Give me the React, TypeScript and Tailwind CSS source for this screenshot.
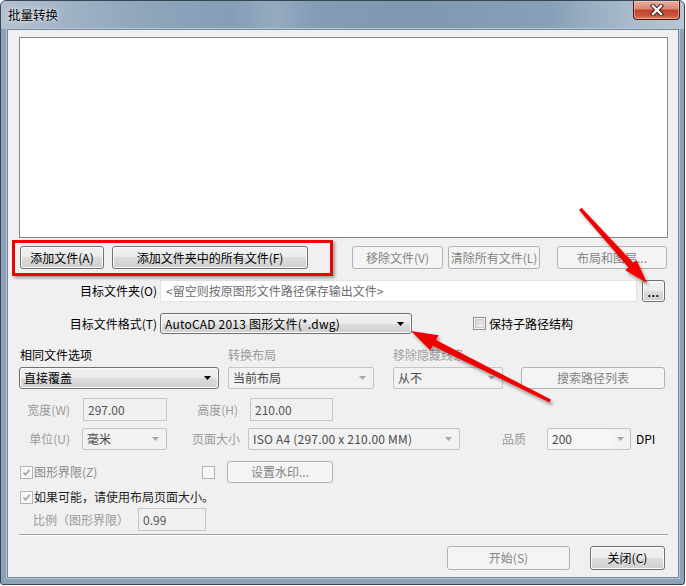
import React from "react";

const BTN_EN =
  "border-[#707070] bg-[linear-gradient(#f2f2f2,#ebebeb_50%,#dddddd_50%,#cfcfcf)] text-black shadow-[inset_0_0_0_1px_#fbfbfb]";
const BTN_DIS = "border-[#adb2b5] bg-[#f4f4f4] text-[#838383]";

function Btn({ cls, disabled, children }: { cls: string; disabled?: boolean; children: React.ReactNode }) {
  return (
    <div
      className={`flex shrink-0 items-center justify-center rounded-[3px] border text-[12px] leading-none ${
        disabled ? BTN_DIS : BTN_EN
      } ${cls}`}
    >
      {children}
    </div>
  );
}

function Tri({ color, cls = "" }: { color: string; cls?: string }) {
  return (
    <svg width="7" height="4" viewBox="0 0 7 4" className={`shrink-0 ${cls}`}>
      <polygon points="0,0 7,0 3.5,4" fill={color} />
    </svg>
  );
}

function Combo({ cls, text }: { cls: string; text: string }) {
  return (
    <div className={`flex shrink-0 items-center rounded-[3px] border ${BTN_EN} ${cls}`}>
      <span className="flex-1 whitespace-nowrap pl-[4px] text-[12px] leading-none text-black">{text}</span>
      <Tri color="#000" cls="mr-[7px]" />
    </div>
  );
}

function DCombo({ cls, text, editable }: { cls: string; text: string; editable?: boolean }) {
  return (
    <div className={`flex shrink-0 items-center rounded-[2px] border border-[#c4c4c4] bg-[#f2f2f2] ${cls}`}>
      <span
        className={`flex h-full flex-1 items-center whitespace-nowrap pl-[4px] text-[12px] leading-none text-[#4a4a4a] ${
          editable ? "mr-[17px] bg-[#f6f6f6]" : ""
        }`}
      >
        {text}
      </span>
      <Tri color="#a9a9a9" cls={editable ? "mr-[6px] -ml-[12px]" : "mr-[7px]"} />
    </div>
  );
}

function DInput({ cls, text }: { cls: string; text: string }) {
  return (
    <div className={`flex shrink-0 items-center border border-[#c6c6c6] bg-[#f0f0f0] pl-[4px] text-[12px] leading-none text-[#555] ${cls}`}>
      {text}
    </div>
  );
}

function Check({ checked, disabled }: { checked?: boolean; disabled?: boolean }) {
  return (
    <div
      className={`flex h-[13px] w-[13px] shrink-0 items-center justify-center border ${
        disabled ? "border-[#b4b4b4] bg-[#f7f7f7]" : "border-[#8e8f8f] bg-[#f4f4f4]"
      }`}
    >
      {checked ? (
        <svg width="9" height="9" viewBox="0 0 9 9">
          <path d="M1.5 4.6 L3.6 6.8 L7.6 1.8" stroke="#a3a3a3" strokeWidth="1.6" fill="none" />
        </svg>
      ) : disabled ? null : (
        <div className="h-[9px] w-[9px] border border-[#c9c9c9] bg-[linear-gradient(135deg,#d0d0d0,#f4f4f4)]" />
      )}
    </div>
  );
}

export default function App() {
  return (
    <div className="relative h-[586px] w-[686px] overflow-hidden bg-white font-['Noto_Sans_CJK_SC',sans-serif]">
      {/* Window */}
      <div className="flex h-[585px] w-[685px] flex-col rounded-t-[6px] rounded-b-[3px] border border-[#3a4552] bg-[#8ca2b8]">
        {/* Title bar */}
        <div className="flex h-[28px] shrink-0 items-center rounded-t-[5px] bg-[linear-gradient(to_right,#b3c2d1_0%,#a2b5c8_8%,#8fa6bc_20%,#859eb6_34%,#95abc0_40%,#849db5_46%,#7f98b0_60%,#86a0b7_80%,#a8bacc_92%,#b7c6d5_100%)] pl-[7px]">
          <span className="text-[12.5px] leading-none text-black [text-shadow:0_0_6px_rgba(255,255,255,0.9),0_0_2px_rgba(255,255,255,0.8)]">
            批量转换
          </span>
          <div className="mr-[4px] ml-auto flex h-[19px] w-[47px] -mt-[9px] self-center items-center justify-center rounded-b-[4px] border border-t-0 border-[#4a1b13] bg-[linear-gradient(#eab0a3,#d98471_45%,#c0402a_50%,#c9553b_80%,#de8468)] shadow-[inset_0_0_0_1px_rgba(255,220,210,0.45)]">
            <svg width="14" height="12" viewBox="0 0 14 12">
              <path d="M3 2 L11 10 M11 2 L3 10" stroke="#3b1d18" strokeWidth="4.4" strokeLinecap="square" />
              <path d="M3 2 L11 10 M11 2 L3 10" stroke="#ffffff" strokeWidth="2.4" strokeLinecap="square" />
            </svg>
          </div>
        </div>

        {/* Client area */}
        <div className="ml-[6px] flex h-[549px] w-[672px] flex-col border border-[#76879a] bg-[#f0f0f0] shadow-[0_0_0_1px_#b9c7d4]">
          {/* List box */}
          <div className="mt-[7px] ml-[11px] h-[201px] w-[649px] shrink-0 border border-[#828790] bg-white" />

          {/* Buttons row */}
          <div className="mt-[8px] ml-[12px] flex h-[23px] shrink-0">
            <Btn cls="w-[84px] h-[23px]">添加文件(A)</Btn>
            <Btn cls="ml-[8px] w-[196px] h-[23px]">添加文件夹中的所有文件(F)</Btn>
            <Btn cls="ml-[44px] w-[91px] h-[23px]" disabled>
              移除文件(V)
            </Btn>
            <Btn cls="ml-[5px] w-[92px] h-[23px]" disabled>
              清除所有文件(L)
            </Btn>
            <Btn cls="ml-[17px] w-[110px] h-[23px]" disabled>
              布局和图层...
            </Btn>
          </div>

          {/* Target folder */}
          <div className="mt-[11px] flex h-[22px] shrink-0 items-center">
            <div className="w-[149px] text-right text-[12px] leading-none text-black">目标文件夹(O)</div>
            <div className="ml-[3px] flex h-[22px] w-[477px] items-center border border-[#e2e3e4] bg-white pl-[5px] text-[12px] leading-none text-[#6d6d6d]">
              &lt;留空则按原图形文件路径保存输出文件&gt;
            </div>
            <Btn cls="ml-[5px] w-[23px] h-[22px]">
              <span className="mt-[2px] text-[11px] font-bold tracking-[0.5px]">...</span>
            </Btn>
          </div>

          {/* Target format */}
          <div className="mt-[11px] flex h-[21px] shrink-0 items-center">
            <div className="w-[149px] text-right text-[12px] leading-none text-black">目标文件格式(T)</div>
            <Combo cls="ml-[3px] w-[252px] h-[21px] tracking-[0.2px]" text="AutoCAD 2013 图形文件(*.dwg)" />
            <div className="ml-[61px] flex items-center">
              <Check />
              <span className="ml-[3px] text-[12px] leading-none text-black">保持子路径结构</span>
            </div>
          </div>

          {/* Section labels */}
          <div className="mt-[13px] flex h-[16px] shrink-0 items-center text-[12px] leading-none">
            <div className="ml-[12px] w-[208px] text-black">相同文件选项</div>
            <div className="w-[165px] text-[#9a9a9a]">转换布局</div>
            <div className="text-[#a0a0a0]">移除隐藏线条</div>
          </div>

          {/* Combos row */}
          <div className="mt-[4px] flex h-[22px] shrink-0 items-center">
            <Combo cls="ml-[11px] w-[200px] h-[22px]" text="直接覆盖" />
            <DCombo cls="ml-[9px] w-[146px] h-[22px]" text="当前布局" />
            <DCombo cls="ml-[19px] w-[110px] h-[22px]" text="从不" />
            <Btn cls="ml-[18px] w-[144px] h-[22px]" disabled>
              搜索路径列表
            </Btn>
          </div>

          {/* Width / height */}
          <div className="mt-[9px] flex h-[23px] shrink-0 items-center text-[12px] leading-none">
            <div className="w-[62px] text-right text-[#9a9a9a]">宽度(W)</div>
            <DInput cls="ml-[13px] w-[84px] h-[23px]" text="297.00" />
            <div className="w-[71px] text-right text-[#9a9a9a]">高度(H)</div>
            <DInput cls="ml-[12px] w-[83px] h-[23px]" text="210.00" />
          </div>

          {/* Unit / page size / quality */}
          <div className="mt-[7px] flex h-[22px] shrink-0 items-center text-[12px] leading-none">
            <div className="w-[62px] text-right text-[#9a9a9a]">单位(U)</div>
            <DCombo cls="ml-[12px] w-[85px] h-[22px]" text="毫米" />
            <div className="w-[73px] text-right text-[#9a9a9a]">页面大小</div>
            <DCombo cls="ml-[8px] w-[212px] h-[22px] tracking-[0.2px]" text="ISO A4 (297.00 x 210.00 MM)" />
            <div className="ml-[42px] w-[45px] text-[#9a9a9a]">品质</div>
            <DCombo cls="w-[84px] h-[22px]" text="200" editable />
            <div className="ml-[5px] text-black">DPI</div>
          </div>

          {/* Checkbox row 1 */}
          <div className="mt-[11px] flex h-[22px] shrink-0 items-center text-[12px] leading-none">
            <div className="ml-[12px] flex w-[182px] items-center">
              <Check checked disabled />
              <span className="ml-[1px] text-[#8a8a8a]">图形界限(Z)</span>
            </div>
            <Check disabled />
            <Btn cls="ml-[12px] w-[106px] h-[22px]" disabled>
              设置水印...
            </Btn>
          </div>

          {/* Checkbox row 2 */}
          <div className="mt-[6px] flex h-[16px] shrink-0 items-center text-[12px] leading-none">
            <div className="ml-[12px] flex items-center">
              <Check checked disabled />
              <span className="ml-[1px] text-[#1e1e1e]">如果可能，请使用布局页面大小。</span>
            </div>
          </div>

          {/* Scale */}
          <div className="mt-[3px] flex h-[23px] shrink-0 items-center text-[12px] leading-none">
            <div className="ml-[25px] w-[105px] text-[#9a9a9a]">比例（图形界限）</div>
            <DInput cls="w-[68px] h-[23px]" text="0.99" />
          </div>

          {/* Separator */}
          <div className="mt-[3px] ml-[11px] h-[2px] w-[649px] shrink-0 border-t border-b border-t-[#a0a0a0] border-b-white" />

          {/* Bottom buttons */}
          <div className="mt-[10px] flex h-[24px] shrink-0">
            <Btn cls="ml-[439px] w-[123px] h-[24px]" disabled>
              开始(S)
            </Btn>
            <Btn cls="ml-[20px] w-[75px] h-[24px]">关闭(C)</Btn>
          </div>
        </div>
      </div>

      {/* Annotation: red rectangle */}
      <div className="pointer-events-none absolute top-[240px] left-[12px] h-[36px] w-[321px] border-[3px] border-[#f20000] shadow-[2px_2px_3px_rgba(0,0,0,0.35)]" />

      {/* Annotation: arrows */}
      <svg className="pointer-events-none absolute top-0 left-0" width="686" height="586" viewBox="0 0 686 586">
        <defs>
          <filter id="sh" x="-20%" y="-20%" width="140%" height="140%">
            <feDropShadow dx="2" dy="3" stdDeviation="1.5" floodColor="#000" floodOpacity="0.35" />
          </filter>
        </defs>
        <g filter="url(#sh)" fill="#f00000">
          <polygon points="579,210 581.5,207.8 633.5,263 628.5,267.5" />
          <polygon points="647,283 625.2,270.3 636.5,260.1" />
          <polygon points="551,399.5 549.5,402.5 432.5,345.7 435.5,339.8" />
          <polygon points="411,331 438.6,335.2 430.2,350.2" />
        </g>
      </svg>
    </div>
  );
}
